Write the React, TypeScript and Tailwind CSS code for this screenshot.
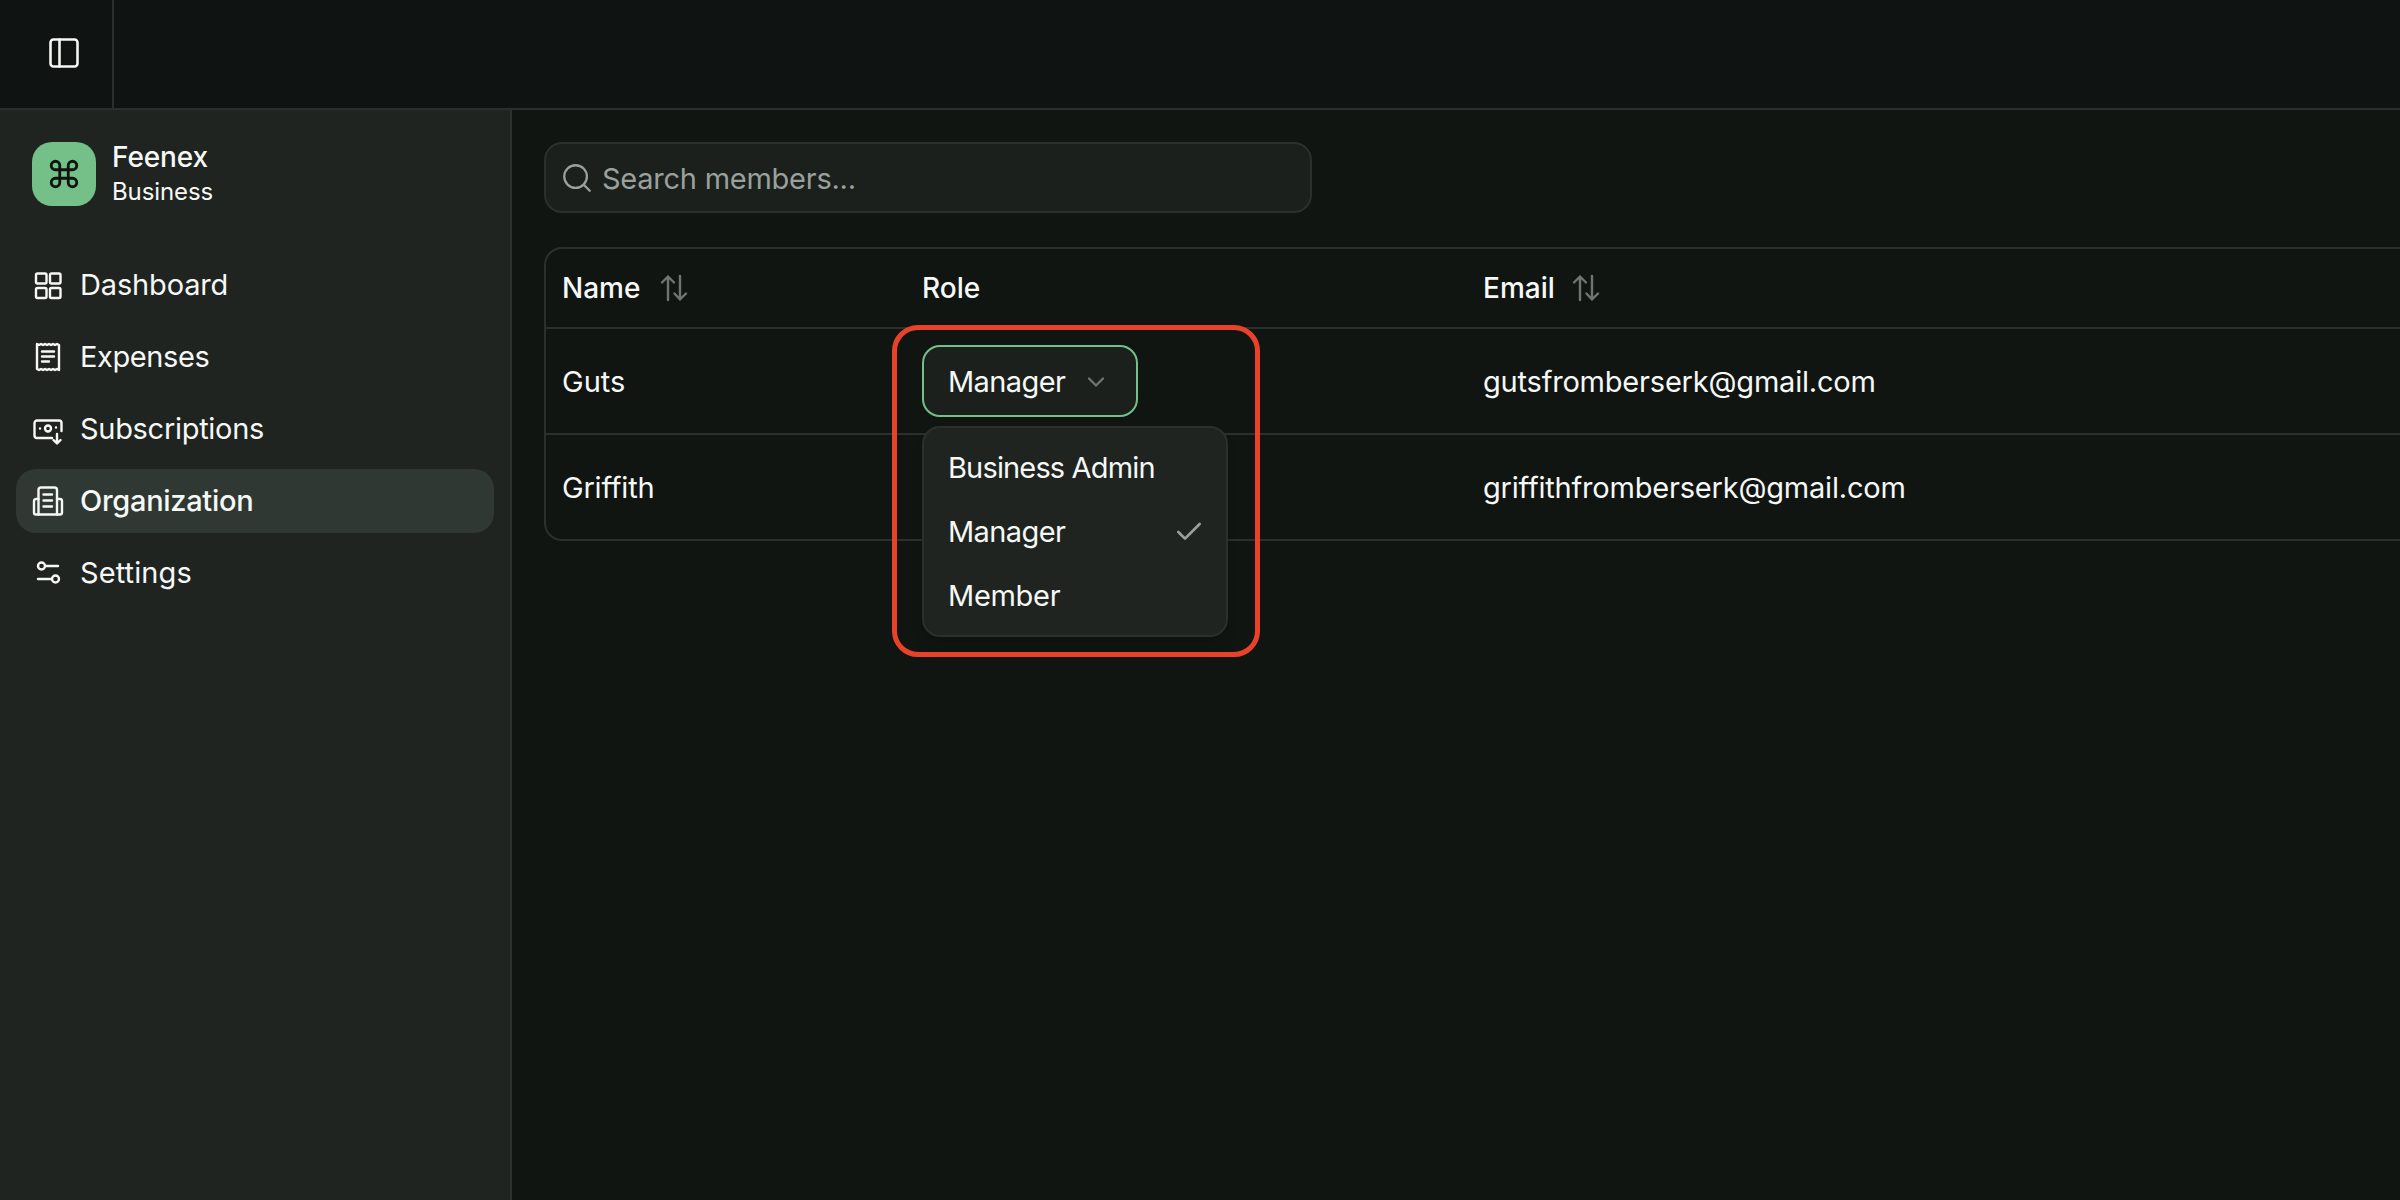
import { Search, ChevronDown, Check, PanelLeft, Command } from "lucide-react";

const I = ({ children }: { children: React.ReactNode }) => (
  <svg width="32" height="32" viewBox="0 0 32 32" fill="none" stroke="currentColor" strokeWidth="2.4" strokeLinecap="round" strokeLinejoin="round" className="shrink-0">
    {children}
  </svg>
);

const nav = [
  { label: "Dashboard", w: "tracking-[-0.15px]", icon: <I><rect x="4" y="4.500" width="10.500" height="10" rx="1.500" /><rect x="18" y="4.500" width="10.500" height="10" rx="1.500" /><rect x="4" y="19" width="10.500" height="10" rx="1.500" /><rect x="18" y="19" width="10.500" height="10" rx="1.500" /></I> },
  { label: "Expenses", w: "tracking-[-0.4px]", icon: <I><path d="M5 3 7 4 9 3 11 4 13 3 15 4 17 3 19 4 21 3 23 4 25 3 27 4V29L25 28 23 29 21 28 19 29 17 28 15 29 13 28 11 29 9 28 7 29 5 28Z" /><path d="M10 10.500H22M10 15.500H22M10 20.500H17" /></I> },
  { label: "Subscriptions", w: "tracking-[-0.3px]", icon: <I><path d="M20 25H5a2.500 2.500 0 0 1-2.500-2.500V10A2.500 2.500 0 0 1 5 7.500H27A2.500 2.500 0 0 1 29.500 10V18" /><circle cx="16" cy="15.500" r="3" /><path d="M8 15.500h.01M24 14.500h.01M25 21V30M21.500 27 25 30.500 28.500 27" /></I> },
  { label: "Organization", w: "tracking-[-0.3px]", icon: <I><path d="M6.500 29.500V5A2.500 2.500 0 0 1 9 2.500H22.500A2.500 2.500 0 0 1 25 5V29.500" /><path d="M6.500 14H4A2 2 0 0 0 2 16V27.500A2 2 0 0 0 4 29.500H28A2 2 0 0 0 30 27.500V16A2 2 0 0 0 28 14H25" /><path d="M11.500 9.500H20M11.500 15.500H20M11.500 21.500H20" /></I> },
  { label: "Settings", w: "tracking-[0.1px]", icon: <I><circle cx="9.500" cy="9" r="3.500" /><path d="M14 9H26" /><path d="M6 22H19" /><circle cx="23.500" cy="22" r="3.500" /></I> },
];

const Sort = () => (
  <svg width="30" height="30" viewBox="0 0 30 30" fill="none" stroke="#6f7571" strokeWidth="2.4" strokeLinecap="round" strokeLinejoin="round" className="shrink-0">
    <path d="M9 27V3.500M3 9.500 9 3.500 15 9.500" />
    <path d="M21 3V26.500M15.500 20.500 21 26.500 27 20.500" />
  </svg>
);

export default function App() {
  return (
    <div className="flex h-[1200px] w-[2400px] flex-col overflow-hidden bg-[#101512] font-['Inter',sans-serif] text-[#f6f8f6]">
      <header className="flex h-[110px] shrink-0 border-b-2 border-[#2b302d] bg-[#0f1311]">
        <div className="flex w-[114px] items-center justify-start border-r-2 border-[#2b302d] pb-[3px] pl-[46px]">
          <PanelLeft size={36} strokeWidth={1.7} />
        </div>
      </header>
      <div className="flex min-h-0 flex-1">
        <aside className="w-[512px] shrink-0 border-r-2 border-[#2b302d] bg-[#1f2420] px-4 pt-[29px]">
          <div className="flex items-center gap-[16px] pl-4">
            <div className="flex h-16 w-16 items-center justify-center rounded-[20px] bg-[#74c088] text-[#0f1411]">
              <Command size={34} strokeWidth={2} />
            </div>
            <div className="flex flex-col">
              <span className="text-[28px] leading-[36px] font-medium tracking-[-0.1px]">Feenex</span>
              <span className="pt-[1px] text-[24px] leading-[32px] tracking-[-0.1px]">Business</span>
            </div>
          </div>
          <nav className="mt-[45px] flex flex-col gap-2">
            {nav.map((n) => (
              <div key={n.label} className={`flex h-16 items-center gap-[16px] rounded-[20px] pl-4 text-[29px] ${n.w} ${n.label === "Organization" ? "bg-[#2f3832] font-medium" : ""}`}>
                {n.icon}
                <span>{n.label}</span>
              </div>
            ))}
          </nav>
        </aside>
        <main className="relative min-w-0 flex-1 px-8 pt-8">
          <div className="flex h-[71px] w-[768px] items-center gap-[8px] rounded-[18px] border-2 border-[#2b302d] bg-[#1b201c] pl-[14px]">
            <Search size={34} strokeWidth={1.6} className="text-[#9aa19c]" />
            <span className="pt-[3px] text-[29px] tracking-[-0.25px] text-[#9aa19c]">Search members...</span>
          </div>
          <div className="mt-[34px] w-[1900px] rounded-tl-[18px] rounded-bl-[18px] border-y-2 border-l-2 border-[#2b302d]">
            <div className="grid h-[80px] grid-cols-[360px_561px_1fr] items-center border-b-2 border-[#2b302d] text-[28px] font-medium">
              <div className="flex items-center gap-[19px] pl-[16px]">Name <Sort /></div>
              <div className="pl-[16px]">Role</div>
              <div className="flex items-center gap-[16px] pl-[16px]">Email <Sort /></div>
            </div>
            <div className="grid h-[106px] grid-cols-[360px_561px_1fr] items-center border-b-2 border-[#2b302d] pt-[1px] text-[29px]">
              <div className="pl-[16px]">Guts</div>
              <div />
              <div className="pl-[16px] tracking-[-0.2px]">gutsfromberserk@gmail.com</div>
            </div>
            <div className="grid h-[104px] grid-cols-[360px_561px_1fr] items-center pt-[1px] text-[29px]">
              <div className="pl-[16px] tracking-[-0.2px]">Griffith</div>
              <div />
              <div className="pl-[16px] tracking-[-0.2px]">griffithfromberserk@gmail.com</div>
            </div>
          </div>
          <div className="absolute top-[215px] left-[380px] h-[332px] w-[368px] rounded-[26px] border-[5px] border-[#e8432a]" />
          <div className="absolute top-[235px] left-[410px] flex h-[72px] w-[216px] items-center gap-[17px] rounded-[18px] border-2 border-[#74c088] bg-[#1b201c] pt-[1px] pl-6 text-[29px] tracking-[-0.6px]">
            Manager
            <ChevronDown size={28} strokeWidth={2} className="text-[#6f7571]" />
          </div>
          <div className="absolute top-[316px] left-[410px] flex h-[211px] w-[306px] flex-col justify-center rounded-[18px] border-2 border-[#2b302d] bg-[#1f2420] px-6 text-[29px] shadow-lg">
            <div className="flex h-16 items-center tracking-[-0.85px]">Business Admin</div>
            <div className="flex h-16 items-center justify-between tracking-[-0.6px]">Manager <Check size={32} strokeWidth={2} className="-mr-[3px] text-[#9aa19c]" /></div>
            <div className="flex h-16 items-center tracking-[-0.3px]">Member</div>
          </div>
        </main>
      </div>
    </div>
  );
}
